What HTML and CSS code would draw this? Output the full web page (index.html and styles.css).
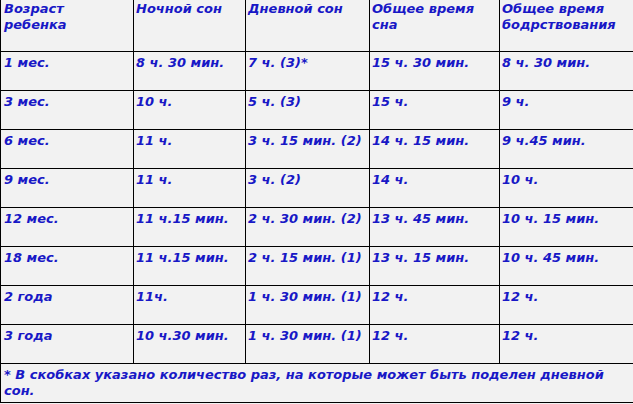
FILE: index.html
```html
<!DOCTYPE html>
<html lang="ru">
<head>
<meta charset="utf-8">
<title>Сон ребенка</title>
<link rel="stylesheet" href="styles.css">
</head>
<body>
<div class="sleep-table">
  <div class="cell first head">Возраст ребенка</div>
  <div class="cell head">Ночной сон</div>
  <div class="cell head">Дневной сон</div>
  <div class="cell head">Общее время сна</div>
  <div class="cell head">Общее время бодрствования</div>

  <div class="cell first">1 мес.</div>
  <div class="cell">8 ч. 30 мин.</div>
  <div class="cell">7 ч. (3)*</div>
  <div class="cell">15 ч. 30 мин.</div>
  <div class="cell">8 ч. 30 мин.</div>

  <div class="cell first">3 мес.</div>
  <div class="cell">10 ч.</div>
  <div class="cell">5 ч. (3)</div>
  <div class="cell">15 ч.</div>
  <div class="cell">9 ч.</div>

  <div class="cell first">6 мес.</div>
  <div class="cell">11 ч.</div>
  <div class="cell">3 ч. 15 мин. (2)</div>
  <div class="cell">14 ч. 15 мин.</div>
  <div class="cell">9 ч.45 мин.</div>

  <div class="cell first">9 мес.</div>
  <div class="cell">11 ч.</div>
  <div class="cell">3 ч. (2)</div>
  <div class="cell">14 ч.</div>
  <div class="cell">10 ч.</div>

  <div class="cell first">12 мес.</div>
  <div class="cell">11 ч.15 мин.</div>
  <div class="cell">2 ч. 30 мин. (2)</div>
  <div class="cell">13 ч. 45 мин.</div>
  <div class="cell">10 ч. 15 мин.</div>

  <div class="cell first">18 мес.</div>
  <div class="cell">11 ч.15 мин.</div>
  <div class="cell">2 ч. 15 мин. (1)</div>
  <div class="cell">13 ч. 15 мин.</div>
  <div class="cell">10 ч. 45 мин.</div>

  <div class="cell first">2 года</div>
  <div class="cell">11ч.</div>
  <div class="cell">1 ч. 30 мин. (1)</div>
  <div class="cell">12 ч.</div>
  <div class="cell">12 ч.</div>

  <div class="cell first">3 года</div>
  <div class="cell">10 ч.30 мин.</div>
  <div class="cell">1 ч. 30 мин. (1)</div>
  <div class="cell">12 ч.</div>
  <div class="cell">12 ч.</div>

  <div class="cell first note">* В скобках указано количество раз, на которые может быть поделен дневной сон.</div>
</div>
</body>
</html>
```
FILE: styles.css
```css
html, body {
  margin: 0;
  padding: 0;
  background: #f2f2f2;
}

.sleep-table {
  display: grid;
  grid-template-columns: 134px 112px 124px 130px 140px;
  grid-template-rows: 52px repeat(9, 39px);
  width: 640px;
  font-family: "DejaVu Sans", Verdana, sans-serif;
  font-size: 13px;
  font-weight: bold;
  font-style: italic;
  line-height: 16px;
  color: #1818c6;
}

.cell {
  box-sizing: border-box;
  border-right: 1px solid #000;
  border-bottom: 1px solid #000;
  padding: 3px 1px 0 2px;
}

.cell.first {
  border-left: 1px solid #000;
  padding-left: 3px;
  padding-right: 6px;
}

.cell.head {
  padding-top: 1px;
}

.cell.note {
  grid-column: 1 / -1;
  padding-right: 10px;
}
```
